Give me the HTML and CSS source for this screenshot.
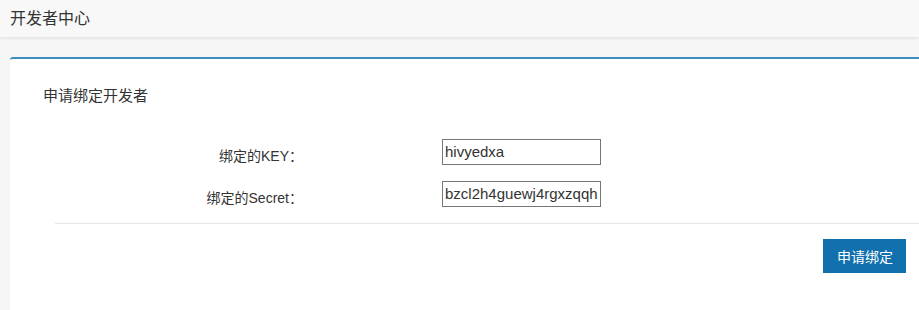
FILE: index.html
```html
<!DOCTYPE html>
<html lang="zh-CN">

<head>
    <meta charset="UTF-8">
    <meta name="viewport" content="width=device-width, initial-scale=1.0">
    <title>开发者中心</title>
    <link rel="stylesheet" href="styles.css">
</head>

<body>
    <div class="top-bar">开发者中心</div>

    <div class="main">
        <div class="panel">
            <div class="panel-title">申请绑定开发者</div>

            <form class="bind-form">
                <div class="form-rows">
                    <label class="form-label">绑定的KEY：</label>
                    <input class="form-input" type="text" value="hivyedxa">
                    <label class="form-label">绑定的Secret：</label>
                    <input class="form-input" type="text" value="bzcl2h4guewj4rgxzqqh">
                </div>
                <div class="form-footer">
                    <button class="btn-primary" type="button">申请绑定</button>
                </div>
            </form>
        </div>
    </div>
</body>

</html>
```

FILE: styles.css
```css
* {
    margin: 0;
    padding: 0;
    box-sizing: border-box;
}

html,
body {
    height: 100%;
}

body {
    display: flex;
    flex-direction: column;
    background-color: #f5f5f5;
    font-family: "Liberation Sans", "Noto Sans CJK SC", sans-serif;
    color: #333;
    overflow: hidden;
}

.top-bar {
    flex-shrink: 0;
    height: 37px;
    line-height: 37px;
    padding-left: 10px;
    font-size: 16px;
    background-color: #f8f8f8;
    box-shadow: 0 1px 3px rgba(0, 0, 0, 0.1);
    position: relative;
}

.main {
    flex: 1;
    display: flex;
    padding: 20px 0 0 10px;
    min-height: 0;
}

.panel {
    flex: 1;
    background-color: #fff;
    border-top: 2px solid #3c8dbc;
    border-top-left-radius: 3px;
}

.panel-title {
    padding: 27px 0 0 33px;
    font-size: 15px;
    line-height: 20px;
}

.bind-form {
    margin: 33px 0 0 45px;
}

.form-rows {
    display: grid;
    grid-template-columns: 248px 159px;
    column-gap: 139px;
    row-gap: 16px;
    align-items: center;
    padding-bottom: 16px;
    border-bottom: 1px solid #e5e5e5;
}

.form-label {
    text-align: right;
    font-size: 14px;
    padding-top: 6px;
}

.form-input {
    height: 26px;
    width: 159px;
    border: 1px solid #767676;
    padding: 0 2px 2px;
    font-family: "Liberation Sans", sans-serif;
    font-size: 15px;
    color: #333;
    outline: none;
}

.form-footer {
    display: flex;
    justify-content: flex-end;
    padding: 15px 13px 0 0;
}

.btn-primary {
    height: 34px;
    padding: 0 13px 0 14px;
    border: none;
    background-color: #1170ad;
    color: #fff;
    font-family: "Liberation Sans", "Noto Sans CJK SC", sans-serif;
    font-size: 14px;
}
```
